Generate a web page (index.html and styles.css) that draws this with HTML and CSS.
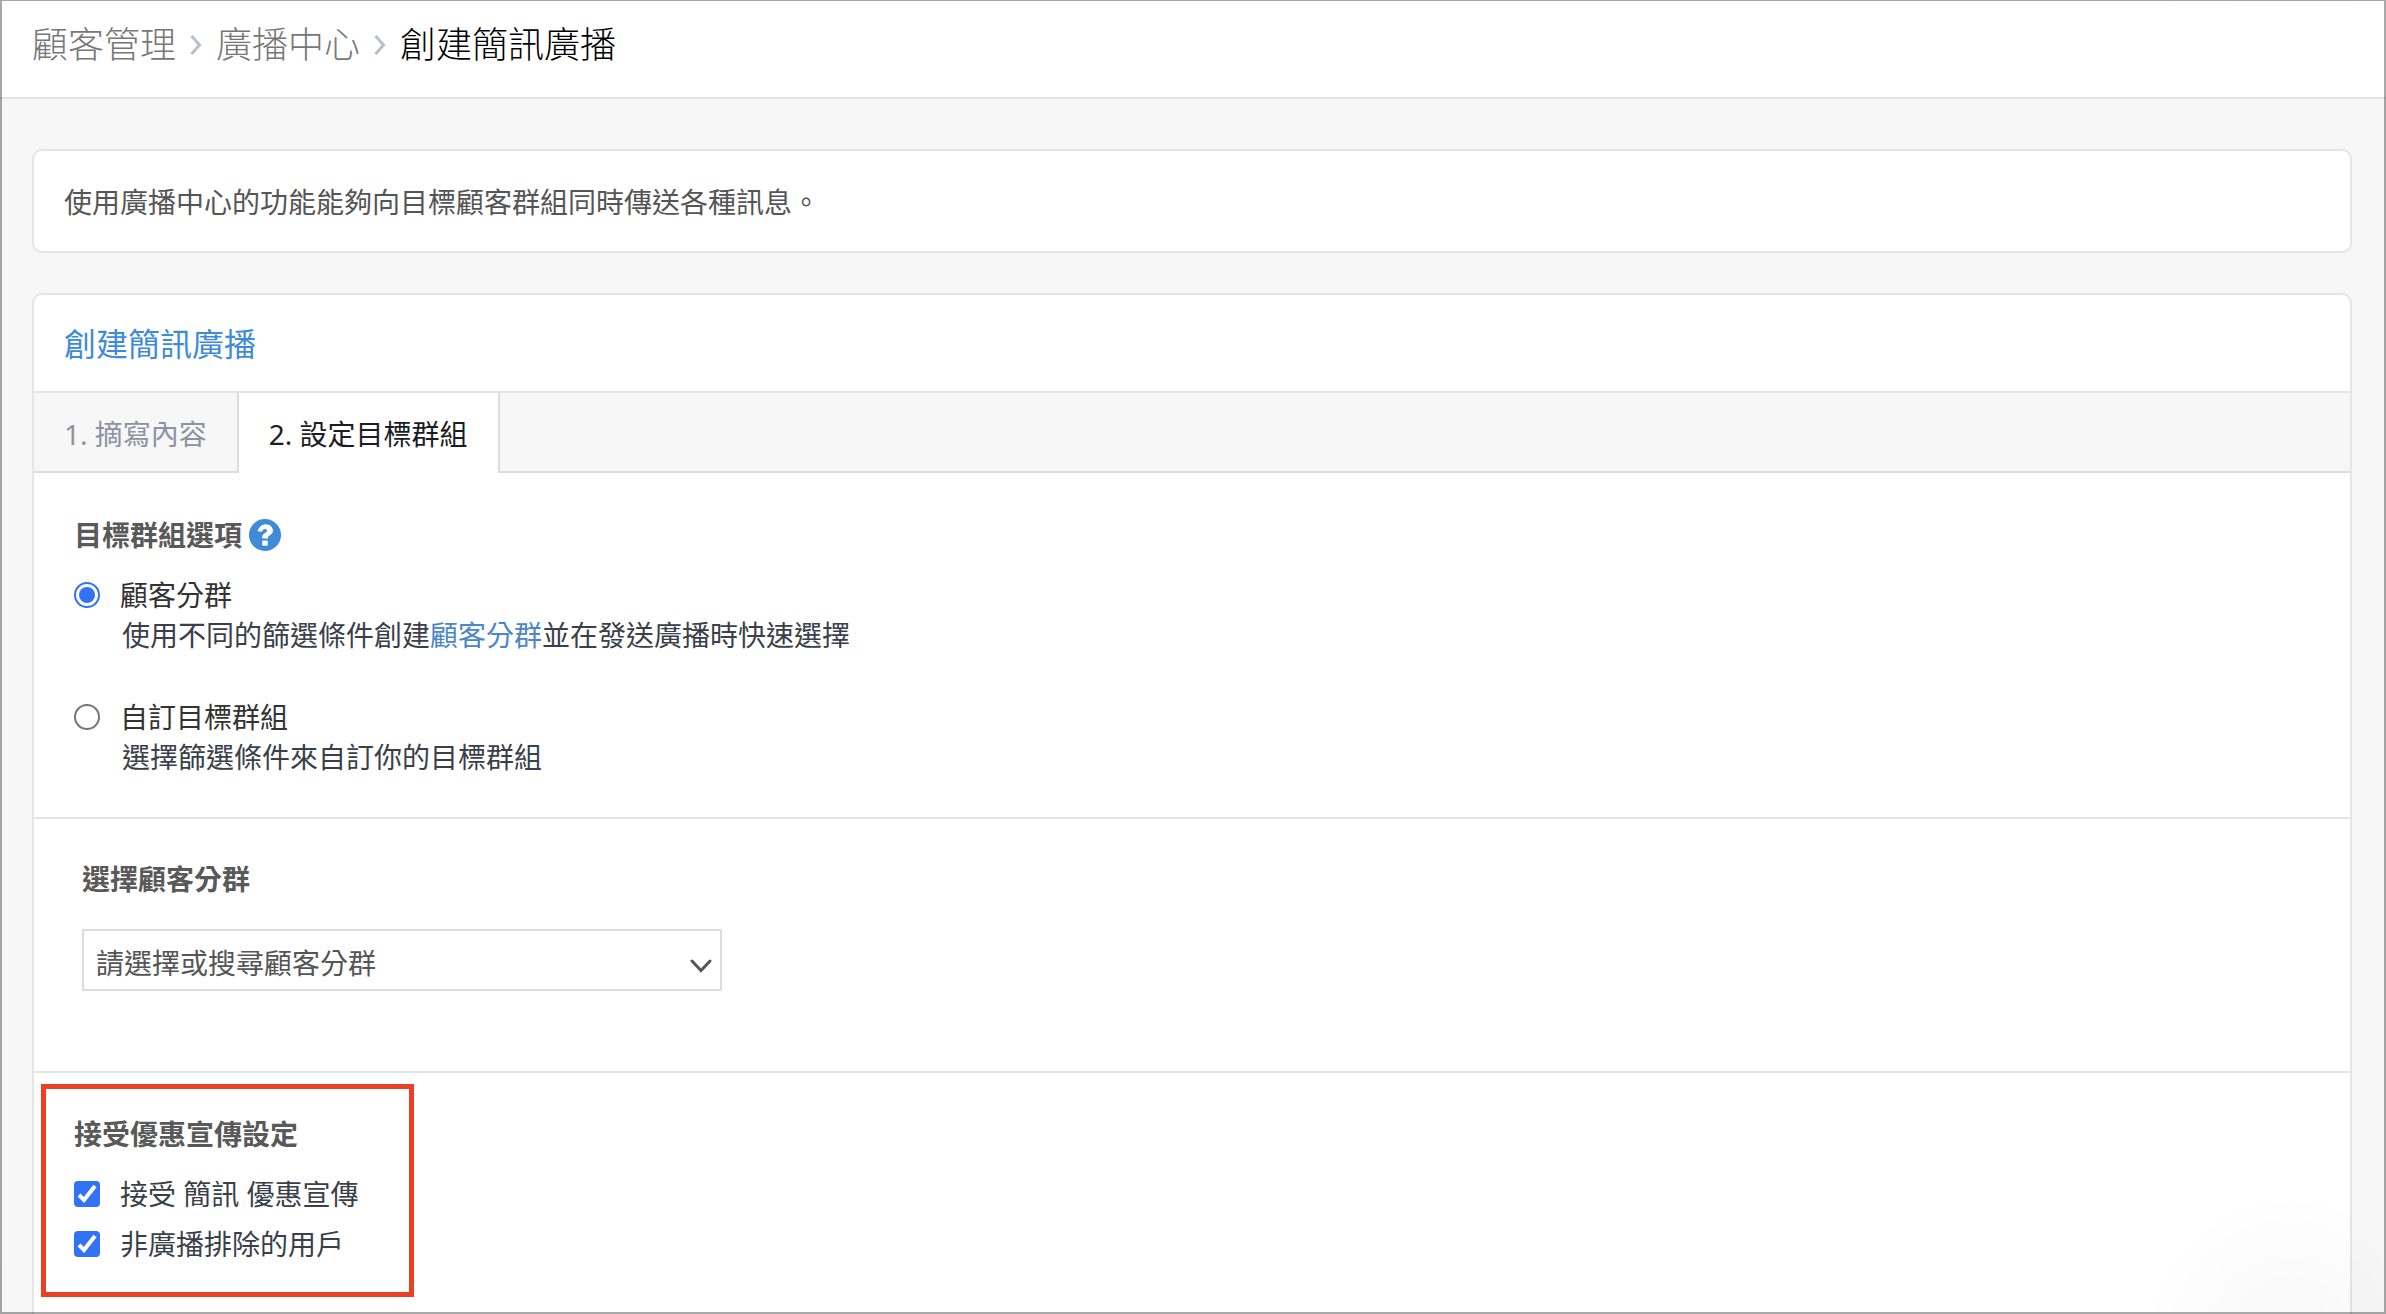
FILE: index.html
```html
<!DOCTYPE html>
<html lang="zh-Hant">
<head>
<meta charset="UTF-8" />
<meta name="viewport" content="width=device-width, initial-scale=1" />
<title>創建簡訊廣播</title>
<link rel="stylesheet" href="styles.css">
</head>
<body>
  <header class="topbar">
    <nav class="breadcrumb">
      <a href="#">顧客管理</a>
      <svg class="crumb-arrow" width="12" height="24" viewBox="0 0 12 24"><path d="M1.5 3L9.5 12L1.5 21" /></svg>
      <a href="#">廣播中心</a>
      <svg class="crumb-arrow" width="12" height="24" viewBox="0 0 12 24"><path d="M1.5 3L9.5 12L1.5 21" /></svg>
      <span class="current">創建簡訊廣播</span>
    </nav>
  </header>

  <main class="page">
    <p class="card notice">使用廣播中心的功能能夠向目標顧客群組同時傳送各種訊息。</p>

    <form class="card panel">
      <h1 class="panel-title">創建簡訊廣播</h1>

      <div class="tabs">
        <button type="button" class="tab">1. 摘寫內容</button>
        <button type="button" class="tab active">2. 設定目標群組</button>
      </div>

      <section class="section">
        <h2 class="heading">目標群組選項
          <svg class="help" width="32" height="32" viewBox="0 0 32 32">
            <circle cx="16" cy="16" r="16" />
            <path d="M8.8 11.2C10.4 8 12.8 5.2 16.8 5.2C20.6 5.2 24 8 24 11.6C24 16.2 19 16.2 19 18.6V19.4H13.2V18.2C13.2 14.2 18 14 18 11.8C18 10.6 17.2 10 16 10C14.6 10 13.8 11.2 12.8 12.6C12.6 12.8 12.4 12.9 12.2 12.7L9 12.2C8.7 12 8.6 11.6 8.8 11.2Z" />
            <rect x="13.2" y="21.4" width="5.6" height="5.4" rx="1" />
          </svg>
        </h2>
        <div class="option">
          <input type="radio" name="target" id="target-segment" checked>
          <label for="target-segment">顧客分群</label>
          <p class="hint">使用不同的篩選條件創建<a href="#">顧客分群</a>並在發送廣播時快速選擇</p>
        </div>
        <div class="option">
          <input type="radio" name="target" id="target-custom">
          <label for="target-custom">自訂目標群組</label>
          <p class="hint">選擇篩選條件來自訂你的目標群組</p>
        </div>
      </section>

      <section class="section segment">
        <label class="heading" for="segment">選擇顧客分群</label>
        <div class="select-box">
          <select id="segment">
            <option>請選擇或搜尋顧客分群</option>
          </select>
          <svg class="chevron" width="22" height="14" viewBox="0 0 22 14"><path d="M2 2L11 11.5L20 2" /></svg>
        </div>
      </section>

      <section class="section consent">
        <div class="highlight">
          <h2 class="heading">接受優惠宣傳設定</h2>
          <div class="check">
            <input type="checkbox" id="accept-sms" checked>
            <label for="accept-sms">接受 簡訊 優惠宣傳</label>
          </div>
          <div class="check">
            <input type="checkbox" id="not-excluded" checked>
            <label for="not-excluded">非廣播排除的用戶</label>
          </div>
        </div>
      </section>
    </form>
  </main>
</body>
</html>
```
FILE: styles.css
```css
* {
  box-sizing: border-box;
}
body {
  margin: 0;
  min-height: 100vh;
  display: flex;
  flex-direction: column;
  background: #f7f7f7;
  color: #3a3f4a;
  font-family: "Noto Sans", "Noto Sans CJK TC", sans-serif;
  font-size: 28px;
  line-height: 40px;
}
/* window frame */
body::after {
  content: "";
  position: fixed;
  inset: 0;
  border: 2px solid rgba(0,0,0,0.34);
  border-top-width: 1px;
  background: radial-gradient(circle 150px at calc(100% - 93px) calc(100% + 30px), rgba(0,0,0,0.03), transparent);
  pointer-events: none;
}
h1, h2, p {
  margin: 0;
}
a {
  text-decoration: none;
}

.topbar {
  background: #fff;
  border-bottom: 2px solid #e5e5e5;
  padding: 19px 32px 26px;
}
.breadcrumb {
  display: flex;
  align-items: center;
  gap: 14px;
  font-size: 36px;
  font-weight: 300;
  line-height: 52px;
}
.breadcrumb a {
  color: #777;
}
.breadcrumb .current {
  color: #000;
}
.crumb-arrow {
  fill: none;
  stroke: #b8bfcf;
  stroke-width: 3;
}

.page {
  flex: 1;
  display: flex;
  flex-direction: column;
  gap: 40px;
  padding: 50px 34px 0 32px;
}
.card {
  background: #fff;
  border: 2px solid #e5e5e5;
  border-radius: 10px;
}
.notice {
  padding: 31px 30px 29px;
  color: #555;
}
.panel {
  flex: 1;
  border-bottom: none;
  border-radius: 10px 10px 0 0;
}
.panel-title {
  padding: 25px 30px 23px;
  color: #3d8bd9;
  font-size: 32px;
  font-weight: 400;
  line-height: 48px;
}

.tabs {
  display: flex;
  background: #f7f7f7;
  border-top: 2px solid #e5e5e5;
  box-shadow: inset 0 -2px #ddd;
}
.tab {
  padding: 21px 30px 19px;
  border: none;
  border-right: 2px solid #ddd;
  background: none;
  color: #8d92a3;
  font: inherit;
  cursor: pointer;
}
.tab.active {
  background: #fff;
  color: #1b1d24;
}

.section {
  padding: 42px 40px 40px;
  border-bottom: 2px solid #e5e5e5;
}
.heading {
  display: flex;
  align-items: center;
  gap: 7px;
  margin-bottom: 20px;
  color: #595959;
  font-size: 28px;
  font-weight: 700;
}
.help circle {
  fill: #3d8bd9;
}
.help path,
.help rect {
  fill: #fff;
}
.option {
  display: grid;
  grid-template-columns: 26px 1fr;
  column-gap: 20px;
  align-items: center;
}
.option + .option {
  margin-top: 42px;
}
.option label {
  color: #333;
  justify-self: start;
}
.hint {
  grid-column: 2;
  padding-left: 2px;
}
.hint a {
  color: #4a86c8;
}
input {
  appearance: none;
  width: 26px;
  height: 26px;
  margin: 0;
}
input[type="radio"] {
  border: 2px solid #767676;
  border-radius: 50%;
}
input[type="radio"]:checked {
  border-color: #3273f6;
  background: #3273f6;
  background-clip: content-box;
  padding: 3px;
}
input[type="checkbox"] {
  border-radius: 4px;
  background: #3273f6;
}
input[type="checkbox"]:checked {
  background-image: url("data:image/svg+xml,%3Csvg xmlns='http://www.w3.org/2000/svg' viewBox='0 0 26 26'%3E%3Cpath d='M5 14L10 19L21 5' fill='none' stroke='white' stroke-width='4'/%3E%3C/svg%3E");
}

.segment {
  padding: 40px 48px 80px;
}
.segment .heading {
  margin-bottom: 30px;
}
.select-box {
  display: grid;
  align-items: center;
  width: 640px;
  max-width: 100%;
}
.select-box select,
.chevron {
  grid-area: 1 / 1;
}
.select-box select {
  appearance: none;
  height: 62px;
  padding: 6px 44px 0 12px;
  border: 2px solid #ddd;
  border-radius: 0;
  background: #fff;
  color: #555;
  font: inherit;
}
.chevron {
  justify-self: end;
  margin: 12px 10px 0 0;
  fill: none;
  stroke: #555;
  stroke-width: 3;
  stroke-linecap: round;
  pointer-events: none;
}

.consent {
  padding: 11px 7px;
  border-bottom: none;
}
.highlight {
  width: fit-content;
  padding: 25px 50px 28px 28px;
  border: 5px solid #eb4026;
}
.check {
  display: flex;
  align-items: center;
  gap: 20px;
}
.check + .check {
  margin-top: 10px;
}
```
